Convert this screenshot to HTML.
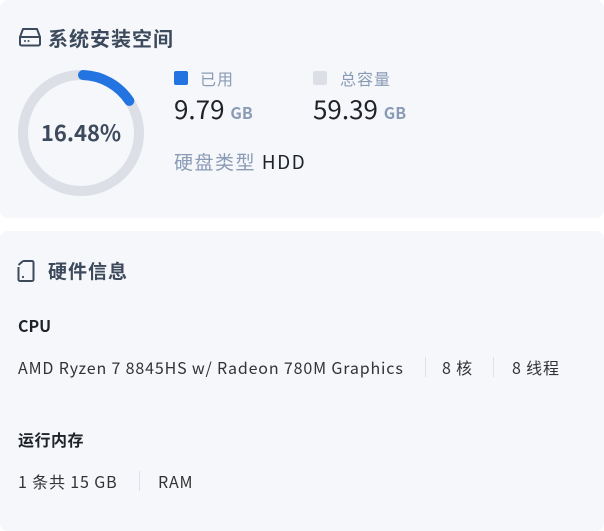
<!DOCTYPE html>
<html><head><meta charset="utf-8"><style>
*{margin:0;padding:0;box-sizing:border-box}
body{width:604px;height:523px;background:#fff;font-family:"Noto Sans CJK SC","Liberation Sans",sans-serif;position:relative;overflow:hidden}
.card{position:absolute;left:0;width:604px;background:#f5f7fb;border-radius:8px}
.a{position:absolute;white-space:nowrap;line-height:1.25}
.t{font-size:20px;font-weight:bold;color:#3d4a5c;letter-spacing:1px}
.g{color:#8a9bb5}
.b{font-size:16px;color:#333;letter-spacing:0.85px}
.sep{position:absolute;width:1px;background:#dde2ea}
</style></head><body>
<div class="card" style="top:0;height:218px"></div>
<div class="card" style="top:231px;height:300px"></div>

<svg class="a" style="left:18px;top:26px" width="24" height="22" viewBox="0 0 24 22"><path d="M5 3h14l3 8v7a1.5 1.5 0 0 1-1.5 1.5h-17A1.5 1.5 0 0 1 2 18v-7z M2 11h20" fill="none" stroke="#3d4a5c" stroke-width="2" stroke-linejoin="round"/><circle cx="7" cy="15" r="1" fill="#3d4a5c"/><circle cx="10.5" cy="15" r="1" fill="#3d4a5c"/></svg>
<div class="a t" style="left:48px;top:25px">系统安装空间</div>

<svg class="a" style="left:17px;top:69px" width="128" height="128" viewBox="0 0 128 128"><circle cx="64" cy="64" r="58" fill="none" stroke="#dcdfe6" stroke-width="10"/><circle cx="64" cy="64" r="58" fill="none" stroke="#2374e1" stroke-width="10" stroke-linecap="round" stroke-dasharray="55 400" transform="rotate(-88 64 64)"/></svg>
<div class="a" style="left:17px;top:119px;width:128px;text-align:center;font-size:22px;font-weight:bold;color:#3d4a5c">16.48%</div>

<div class="a" style="left:174px;top:71px;width:14px;height:14px;background:#2374e1;border-radius:2px"></div>
<div class="a g" style="left:200px;top:68px;font-size:16px;letter-spacing:1px">已用</div>
<div class="a" style="left:174px;top:93px;font-size:26px;color:#1f2329">9.79 <span style="font-size:16px;font-weight:bold" class="g">GB</span></div>
<div class="a" style="left:313px;top:71px;width:14px;height:14px;background:#dcdfe6;border-radius:2px"></div>
<div class="a g" style="left:340px;top:68px;font-size:16px;letter-spacing:1px">总容量</div>
<div class="a" style="left:313px;top:93px;font-size:26px;color:#1f2329">59.39 <span style="font-size:16px;font-weight:bold" class="g">GB</span></div>
<div class="a" style="left:174px;top:150px;font-size:19px;letter-spacing:1.5px"><span class="g">硬盘类型</span> <span style="color:#1f2329">HDD</span></div>

<svg class="a" style="left:17px;top:259px" width="18" height="24" viewBox="0 0 18 24"><path d="M6 2H15a1.5 1.5 0 0 1 1.5 1.5v17a1.5 1.5 0 0 1-1.5 1.5H3a1.5 1.5 0 0 1-1.5-1.5V8" fill="none" stroke="#3d4a5c" stroke-width="2"/><path d="M1.5 6L6 2" stroke="#3d4a5c" stroke-width="2"/><circle cx="6" cy="18" r="1.1" fill="#3d4a5c"/></svg>
<div class="a t" style="left:48px;top:259px;font-size:19px">硬件信息</div>

<div class="a" style="left:18px;top:315px;font-size:16px;font-weight:bold;color:#1f2329">CPU</div>
<div class="a b" style="left:18px;top:357px">AMD Ryzen 7 8845HS w/ Radeon 780M Graphics</div>
<div class="sep" style="left:425px;top:357px;height:20px"></div>
<div class="a b" style="left:442px;top:357px">8 核</div>
<div class="sep" style="left:493px;top:357px;height:20px"></div>
<div class="a b" style="left:512px;top:357px">8 线程</div>

<div class="a" style="left:18px;top:429px;font-size:16px;font-weight:bold;color:#1f2329;letter-spacing:0.5px">运行内存</div>
<div class="a b" style="left:18px;top:471px">1 条共 15 GB</div>
<div class="sep" style="left:139px;top:471px;height:20px"></div>
<div class="a b" style="left:158px;top:471px">RAM</div>
</body></html>
